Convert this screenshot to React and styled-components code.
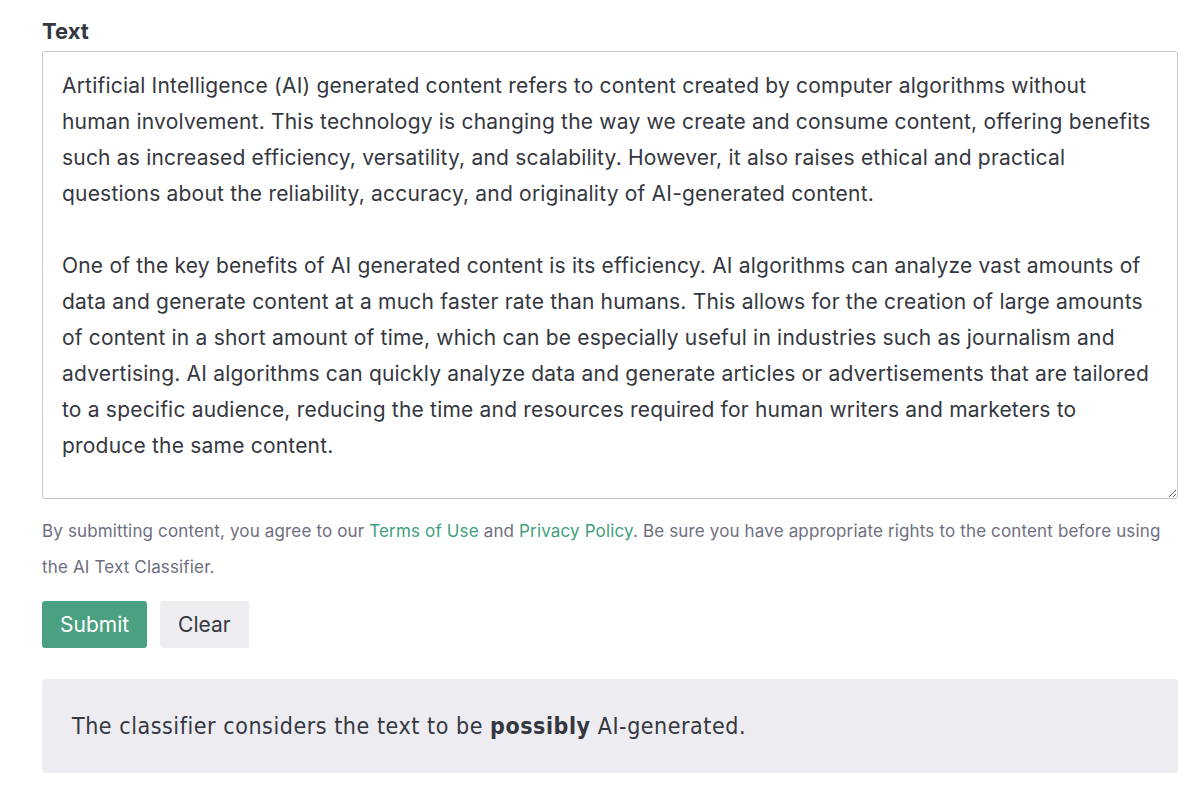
import React from 'react';
import styled, { createGlobalStyle } from 'styled-components';

const GlobalStyle = createGlobalStyle`
	body {
		margin: 0;
		background: #ffffff;
		font-family: Inter, "Noto Sans", sans-serif;
		color: #353740;
	}
`;

const Page = styled.div`
	padding: 18px 22px 0 42px;
	display: flex;
	flex-direction: column;
`;

const Label = styled.label`
	font-size: 22px;
	font-weight: 700;
	line-height: 26px;
	color: #353740;
	margin-bottom: 7px;
`;

const TextBox = styled.textarea`
	box-sizing: border-box;
	width: 100%;
	height: 448px;
	padding: 16px 19px;
	border: 1px solid #c5c5d2;
	border-radius: 3px;
	font-family: Inter, "Noto Sans", sans-serif;
	font-size: 21px;
	letter-spacing: 0.2px;
	line-height: 36px;
	color: #353740;
	resize: vertical;
	outline: none;
`;

const Notice = styled.p`
	margin: 14px 0 0;
	font-size: 17px;
	letter-spacing: 0.15px;
	line-height: 36px;
	color: #6e6e80;
`;

const Link = styled.a`
	color: #3f9f7d;
	text-decoration: none;
`;

const Actions = styled.div`
	display: flex;
	gap: 13px;
	margin-top: 16px;
`;

const Button = styled.button`
	height: 47px;
	padding: 0 18px;
	border: none;
	border-radius: 3px;
	font-family: Inter, "Noto Sans", sans-serif;
	font-size: 21px;
	background: ${p => (p.$primary ? '#4aa181' : '#ececf1')};
	color: ${p => (p.$primary ? '#ffffff' : '#353740')};
	cursor: pointer;
`;

const Result = styled.div`
	margin-top: 31px;
	height: 94px;
	display: flex;
	align-items: center;
	padding: 0 30px;
	background: #ececf1;
	border-radius: 4px;
	font-family: "DejaVu Sans Condensed", Roboto, sans-serif;
	font-size: 23px;
	letter-spacing: 0.55px;
	color: #353740;
`;

const text = `Artificial Intelligence (AI) generated content refers to content created by computer algorithms without human involvement. This technology is changing the way we create and consume content, offering benefits such as increased efficiency, versatility, and scalability. However, it also raises ethical and practical questions about the reliability, accuracy, and originality of AI-generated content.

One of the key benefits of AI generated content is its efficiency. AI algorithms can analyze vast amounts of data and generate content at a much faster rate than humans. This allows for the creation of large amounts of content in a short amount of time, which can be especially useful in industries such as journalism and advertising. AI algorithms can quickly analyze data and generate articles or advertisements that are tailored to a specific audience, reducing the time and resources required for human writers and marketers to produce the same content.`;

const App = () => (
	<>
		<GlobalStyle />
		<Page>
			<Label htmlFor="content">Text</Label>
			<TextBox id="content" defaultValue={text} />
			<Notice>
				By submitting content, you agree to our <Link href="#">Terms of Use</Link> and{' '}
				<Link href="#">Privacy Policy</Link>. Be sure you have appropriate rights to the content before using
				the AI Text Classifier.
			</Notice>
			<Actions>
				<Button $primary>Submit</Button>
				<Button>Clear</Button>
			</Actions>
			<Result>
				<span>
					The classifier considers the text to be <b>possibly</b> AI-generated.
				</span>
			</Result>
		</Page>
	</>
);

export default App;
